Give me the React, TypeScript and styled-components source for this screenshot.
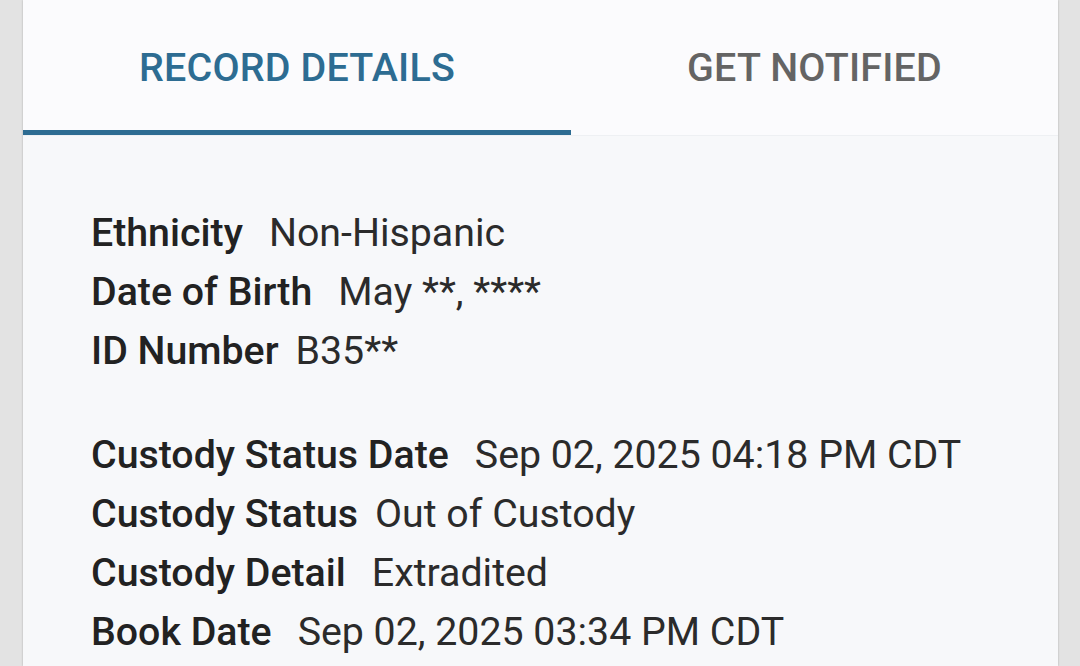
import styled, { createGlobalStyle } from 'styled-components'

const GlobalStyle = createGlobalStyle`
  html, body {
    margin: 0;
    padding: 0;
    background: #e3e3e3;
    font-family: Roboto, "Noto Sans", sans-serif;
  }
`

const Page = styled.div`
  height: 666px;
  overflow: hidden;
  padding-left: 23px;
`

const Card = styled.div`
  width: 1035px;
  height: 666px;
  background: #f7f8fa;
  box-shadow: 0 0 2px rgba(0, 0, 0, 0.25);
`

const TabBar = styled.div`
  display: flex;
  height: 136px;
  background: #fbfbfd;
  border-bottom: 1px solid #eef0f3;
  box-sizing: border-box;
`

const Tab = styled.div<{ $active?: boolean; $width?: number }>`
  display: flex;
  align-items: center;
  justify-content: center;
  box-sizing: border-box;
  width: ${p => (p.$width ? `${p.$width}px` : 'auto')};
  flex: ${p => (p.$width ? 'none' : 1)};
  padding-top: 5px;
  font-size: 39.4px;
  font-weight: 500;
  letter-spacing: 0.2px;
  color: ${p => (p.$active ? '#2d6c92' : '#646464')};
  border-bottom: 5px solid ${p => (p.$active ? '#2d6c92' : 'transparent')};
`

const Content = styled.div`
  padding: 68px 0 0 68px;
  display: flex;
  flex-direction: column;
  gap: 45px;
`

const Group = styled.div`
  display: flex;
  flex-direction: column;
`

const Row = styled.div<{ $tight?: boolean }>`
  display: flex;
  align-items: baseline;
  gap: ${p => (p.$tight ? '17px' : '26px')};
  height: 59px;
  line-height: 59px;
  font-size: 39.3px;
  white-space: nowrap;
`

const Label = styled.span`
  font-weight: 500;
  color: #222222;
`

const Value = styled.span`
  font-weight: 400;
  color: #2b2b2b;
`

const personal = [
  { label: 'Ethnicity', value: 'Non-Hispanic' },
  { label: 'Date of Birth', value: 'May **, ****' },
  { label: 'ID Number', value: 'B35**', tight: true },
]

const custody = [
  { label: 'Custody Status Date', value: 'Sep 02, 2025 04:18 PM CDT' },
  { label: 'Custody Status', value: 'Out of Custody', tight: true },
  { label: 'Custody Detail', value: 'Extradited' },
  { label: 'Book Date', value: 'Sep 02, 2025 03:34 PM CDT' },
]

const App = () => {
  return (
    <Page>
      <GlobalStyle />
      <Card>
        <TabBar>
          <Tab $active $width={548}>RECORD DETAILS</Tab>
          <Tab>GET NOTIFIED</Tab>
        </TabBar>
        <Content>
          <Group>
            {personal.map(item => (
              <Row key={item.label} $tight={item.tight}>
                <Label>{item.label}</Label>
                <Value>{item.value}</Value>
              </Row>
            ))}
          </Group>
          <Group>
            {custody.map(item => (
              <Row key={item.label} $tight={item.tight}>
                <Label>{item.label}</Label>
                <Value>{item.value}</Value>
              </Row>
            ))}
          </Group>
        </Content>
      </Card>
    </Page>
  )
}

export default App
